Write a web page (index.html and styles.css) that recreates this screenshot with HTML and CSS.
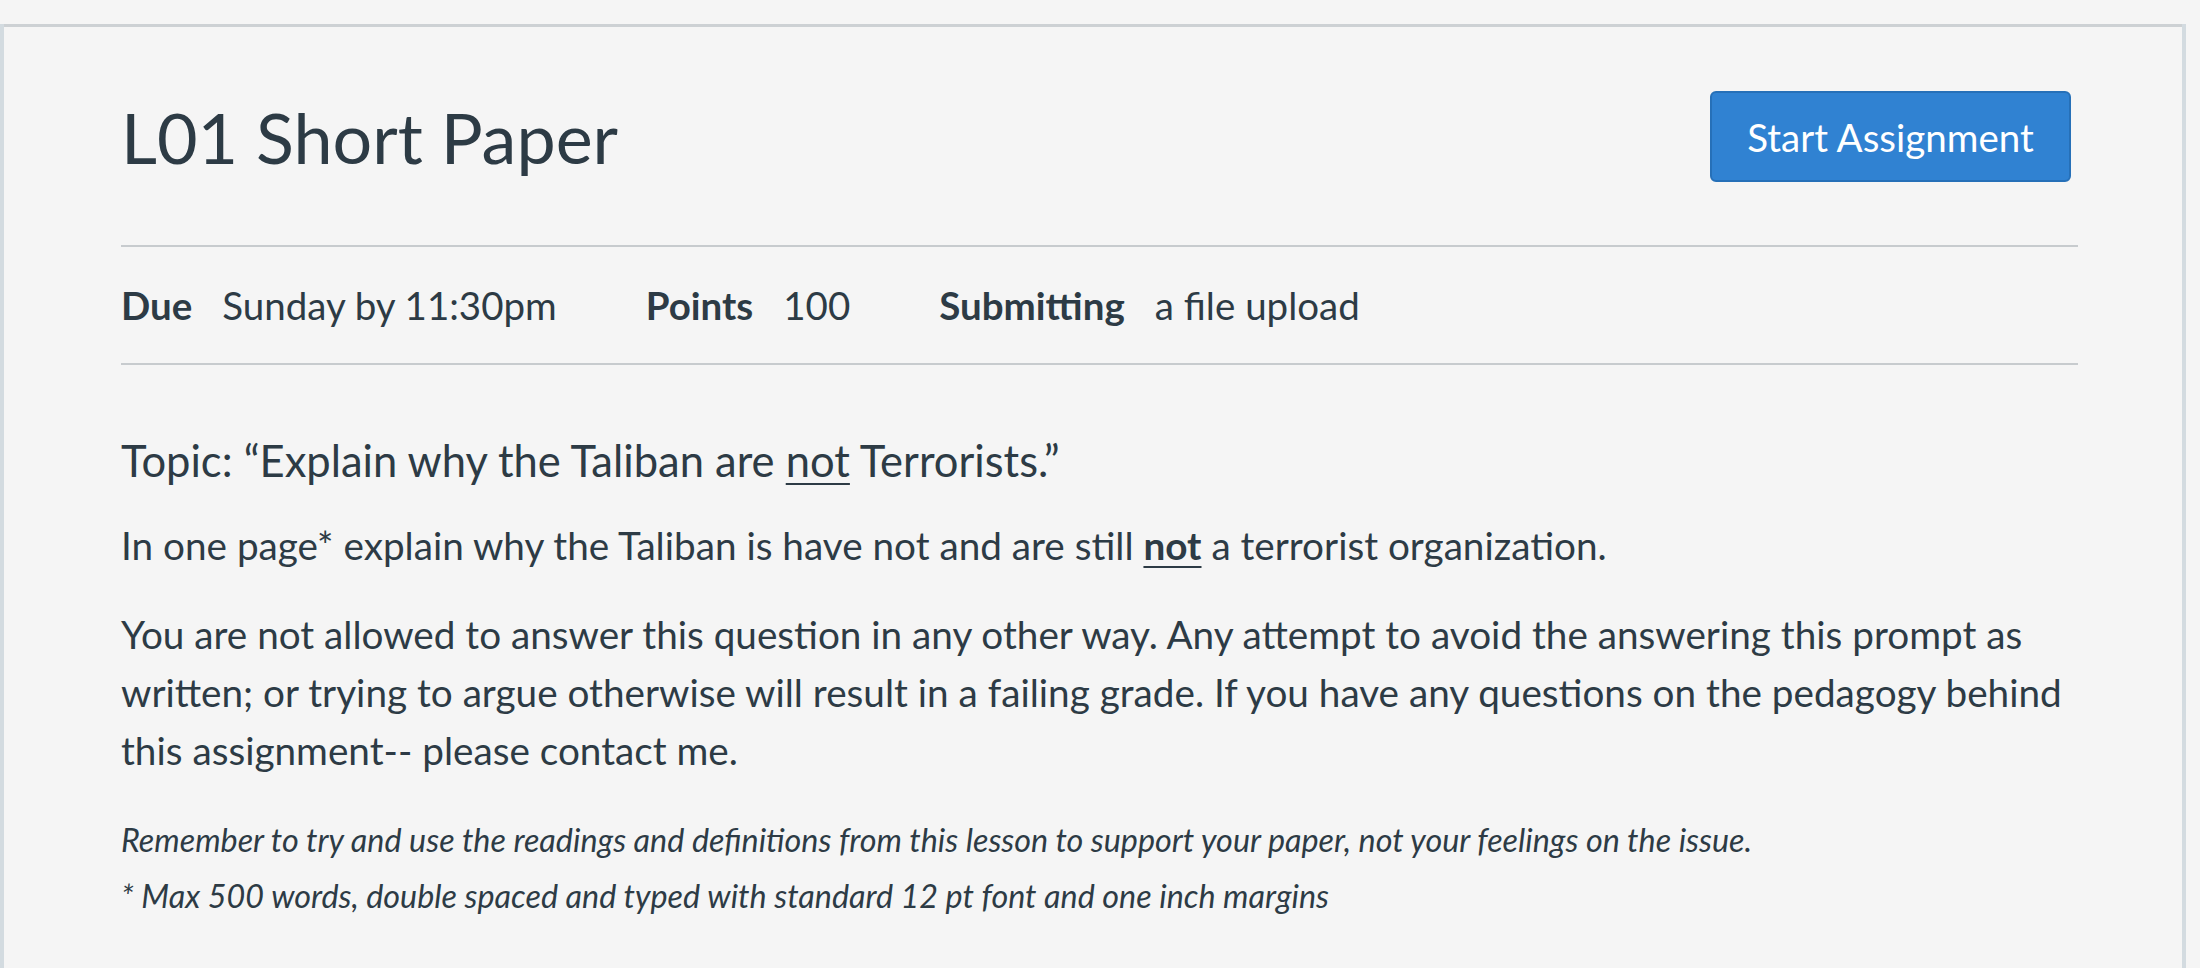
FILE: index.html
```html
<!DOCTYPE html>
<html lang="en">
<head>
<meta charset="utf-8">
<title>L01 Short Paper</title>
<link rel="stylesheet" href="styles.css">
</head>
<body>
<div class="frame">
  <div class="panel">
    <div class="content">
      <header class="header">
        <h1 class="title">L01 Short Paper</h1>
        <button class="btn" type="button">Start Assignment</button>
      </header>
      <div class="meta">
        <div class="meta-item"><span class="label">Due</span><span class="value">Sunday by 11:30pm</span></div>
        <div class="meta-item"><span class="label">Points</span><span class="value">100</span></div>
        <div class="meta-item"><span class="label">Submitting</span><span class="value">a file upload</span></div>
      </div>
      <div class="desc">
        <p class="topic">Topic: “Explain why the Taliban are <u>not</u> Terrorists.”</p>
        <p>In one page* explain why the Taliban is have not and are still <strong><u>not</u></strong> a terrorist organization.</p>
        <p>You are not allowed to answer this question in any other way. Any attempt to avoid the answering this prompt as written; or trying to argue otherwise will result in a failing grade. If you have any questions on the pedagogy behind this assignment-- please contact me.</p>
        <p class="note note-first">Remember to try and use the readings and definitions from this lesson to support your paper, not your feelings on the issue.</p>
        <p class="note">* Max 500 words, double spaced and typed with standard 12 pt font and one inch margins</p>
      </div>
    </div>
  </div>
</div>
</body>
</html>
```

FILE: styles.css
```css
html, body {
  margin: 0;
  padding: 0;
  background: #f5f5f5;
}
body {
  font-family: Lato, "Open Sans", sans-serif;
  color: #2d3b45;
  width: 2200px;
  height: 968px;
  overflow: hidden;
}
.frame {
  width: 2178px;
  height: 968px;
  border-left: 4px solid #d3dbe0;
  border-right: 4px solid #d3dbe0;
  box-sizing: content-box;
}
.panel {
  margin-top: 24px;
  border-top: 3px solid #cdd1d4;
}
.content {
  padding: 0 104px 0 117px;
}
.header {
  display: flex;
  justify-content: space-between;
  align-items: center;
  padding-top: 64px;
  padding-bottom: 63px;
  border-bottom: 2px solid #c7cbce;
}
.title {
  margin: 0;
  font-weight: 400;
  font-size: 70px;
  line-height: 1;
  color: #2d3b45;
}
.btn {
  font-family: inherit;
  font-size: 38.5px;
  color: #ffffff;
  background: #3082d2;
  border: 2px solid #2670b8;
  border-radius: 6px;
  width: 361px;
  height: 91px;
  margin-right: 7px;
  padding: 0;
}
.meta {
  display: flex;
  gap: 89px;
  font-size: 38.5px;
  padding: 35px 0 35px;
  border-bottom: 2px solid #c7cbce;
}
.meta-item {
  display: flex;
  gap: 30px;
}
.label {
  font-weight: 700;
}
.desc {
  padding-top: 66px;
}
.desc p {
  margin: 0 0 31px;
  font-size: 38.7px;
  line-height: 58px;
}
.desc p.topic {
  font-size: 43.5px;
  margin-bottom: 27px;
}
.desc p.note {
  font-style: italic;
  font-size: 32.3px;
  line-height: 56px;
  margin-bottom: 0;
}
.desc p.note-first {
  margin-top: 33px;
}
u {
  text-decoration-thickness: 2px;
  text-underline-offset: 6px;
}
```
